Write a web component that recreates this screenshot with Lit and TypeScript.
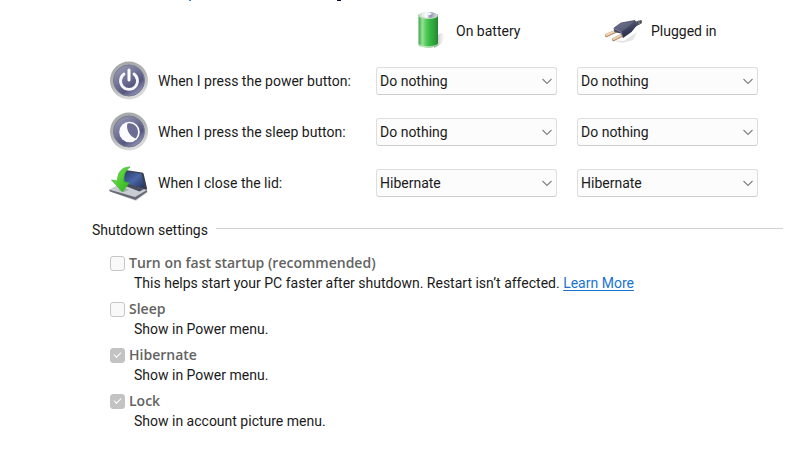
import { LitElement, html, css, svg } from "lit";
import { customElement } from "lit/decorators.js";

const batteryIcon = html`<svg class="icon" width="40" height="40" viewBox="0 0 40 40" aria-hidden="true">
  <defs>
    <linearGradient id="cell" x1="0" x2="1">
      <stop offset="0" stop-color="#3fa54a" /><stop offset=".2" stop-color="#93e292" />
      <stop offset=".38" stop-color="#58cc5e" /><stop offset=".6" stop-color="#35b442" />
      <stop offset=".82" stop-color="#2f9f3b" /><stop offset="1" stop-color="#23832f" />
    </linearGradient>
    <linearGradient id="cap" x1="0" x2="1">
      <stop offset="0" stop-color="#d9dde0" /><stop offset=".4" stop-color="#ffffff" />
      <stop offset=".6" stop-color="#8f90b4" /><stop offset="1" stop-color="#d5d8e2" />
    </linearGradient>
    <linearGradient id="cast" x1="0" x2="1">
      <stop offset="0" stop-color="#888" stop-opacity=".8" /><stop offset="1" stop-color="#ccc" stop-opacity="0" />
    </linearGradient>
  </defs>
  <path d="M28 26c4-5 9-5 9-1 0 4-4 9-11 12z" fill="url(#cast)" />
  <path d="M10.500 3.500v30c0 4 19.500 4 19.500 0v-30z" fill="url(#cell)" />
  <path d="M10.500 32v1.500c0 4 19.500 4 19.500 0V32c0 4-19.500 4-19.500 0z" fill="#cfe8cd" opacity=".7" />
  <ellipse cx="20.250" cy="4.500" rx="9.700" ry="3.600" fill="#c3dcc5" />
  <ellipse cx="20.500" cy="4" rx="8.300" ry="2.900" fill="url(#cap)" />
  <ellipse cx="20" cy="2.700" rx="3.500" ry="1.400" fill="#f4f5fa" />
</svg>`;

const plugIcon = html`<svg class="icon" width="40" height="40" viewBox="0 0 40 40" aria-hidden="true">
  <defs>
    <linearGradient id="body" x1="0" x2=".5" y1="0" y2="1">
      <stop offset="0" stop-color="#777b92" /><stop offset=".45" stop-color="#4c506c" />
      <stop offset="1" stop-color="#262840" />
    </linearGradient>
  </defs>
  <path d="M8 29l13 1 13-9-4 8-11 3z" fill="#bbb" opacity=".4" />
  <path d="M31 11l7.500-2 .5 3-7 4z" fill="#4b4b55" />
  <path d="M33 10l1 5M35.500 9.500l1 4" stroke="#8c8c95" stroke-width="1" />
  <path d="M3.500 24.500l11-5M10.500 28.500l10-5" stroke="#b08d68" stroke-width="3.200" stroke-linecap="round" />
  <path d="M3.500 24l11-5M10.500 28l10-5" stroke="#ecd2ae" stroke-width="2" stroke-linecap="round" />
  <path d="M10.500 17l7.500-5.500 14-2.500 2.500 4.500-6 7.500-8.500 6-2-4.500-6.500-1.500z" fill="url(#body)" />
  <path d="M12 17l6.500-4.500 12.500-2-7 6.500-6 4z" fill="#868ba3" opacity=".35" />
  <path d="M11 17.500l7 3.500 1.800 5.500" fill="none" stroke="#8589a0" stroke-width=".8" />
</svg>`;

const disc = (glyph: unknown) => html`<svg class="icon" width="40" height="40" viewBox="0 0 40 40" aria-hidden="true">
  <defs>
    <linearGradient id="rim" x1="0" y1="0" x2=".4" y2="1">
      <stop offset="0" stop-color="#a2a5a6" /><stop offset=".6" stop-color="#b2b4b6" />
      <stop offset="1" stop-color="#d8d9da" />
    </linearGradient>
    <linearGradient id="face" x1="0" y1="0" x2=".7" y2="1">
      <stop offset="0" stop-color="#a3a4bb" /><stop offset=".45" stop-color="#747599" />
      <stop offset=".75" stop-color="#565780" /><stop offset="1" stop-color="#9495b9" />
    </linearGradient>
  </defs>
  <circle cx="20" cy="19.500" r="19" fill="url(#rim)" />
  <circle cx="20" cy="19.500" r="15.500" fill="url(#face)" stroke="#77798c" stroke-width="1" />
  ${glyph}
</svg>`;

const powerIcon = disc(svg`
  <path d="M15 13a8.500 8.500 0 1 0 10 0" fill="none" stroke="#f7f7fb" stroke-width="2.800" stroke-linecap="round" />
  <path d="M20 9v10" stroke="#fff" stroke-width="3" stroke-linecap="round" />`);

const sleepIcon = disc(svg`
  <circle cx="20.500" cy="20" r="10.300" fill="#fcfcff" />
  <path d="M18.500 11.500c5-1.500 10.500 2.500 10.500 8.500 0 3-1 5-2.500 6.500C21 24.500 16.500 17.500 18.500 11.500z" fill="#6c6d92" />`);

const lidIcon = html`<svg class="icon" width="40" height="40" viewBox="0 0 40 40" aria-hidden="true">
  <defs>
    <linearGradient id="screen" x1="0" y1="0" x2="1" y2="1">
      <stop offset="0" stop-color="#2b3868" /><stop offset=".5" stop-color="#4a68a8" />
      <stop offset="1" stop-color="#22305f" />
    </linearGradient>
    <linearGradient id="arrow" x1="0" y1="0" x2="1" y2="1">
      <stop offset="0" stop-color="#7fe850" /><stop offset="1" stop-color="#27b01a" />
    </linearGradient>
  </defs>
  <path d="M2 29l25 9 12-9-3-4z" fill="#aaa" opacity=".45" />
  <path d="M13 6.500l20 3c1 .2 1.500.6 1.700 1.500l3.500 15-2.500 2L14 22z" fill="#3b3f4c" />
  <path d="M15 8l17.500 2.700 3 14.300L15 20.500z" fill="url(#screen)" />
  <path d="M0 26.500l13-6.500 25 7-12 8z" fill="#c9ccd3" />
  <path d="M0 26.500L26 34l12-7v2L26.500 37 1 28.500z" fill="#666a74" />
  <path d="M14 22l3-1.500 18 5.500-4.500 2.500z" fill="#474c5c" />
  <path d="M9 27l5-2 6 1.700-5 2.200z" fill="#a4a8b2" />
  <path d="M21 4c-8 0-12.500 5-12.500 14L2.500 17l11 12L20 20l-5-1.200C14.500 12 16 8 21 4z" fill="url(#arrow)" stroke="#3abb2c" stroke-width=".7" />
</svg>`;

const actions = ["Do nothing", "Sleep", "Hibernate", "Shut down"];

const rows = [
  { id: "power", icon: powerIcon, label: "When I press the power button:", value: "Do nothing" },
  { id: "sleep", icon: sleepIcon, label: "When I press the sleep button:", value: "Do nothing" },
  { id: "lid", icon: lidIcon, label: "When I close the lid:", value: "Hibernate" },
];

const options = [
  {
    id: "fast",
    title: "Turn on fast startup (recommended)",
    note: "This helps start your PC faster after shutdown. Restart isn’t affected.",
    link: "Learn More",
    checked: false,
  },
  { id: "opt-sleep", title: "Sleep", note: "Show in Power menu.", checked: false },
  { id: "opt-hibernate", title: "Hibernate", note: "Show in Power menu.", checked: true },
  { id: "opt-lock", title: "Lock", note: "Show in account picture menu.", checked: true },
];

@customElement("app-root")
export class AppRoot extends LitElement {
  static styles = css`
    :host {
      display: block;
      box-sizing: border-box;
      min-height: 100vh;
      padding: 6px 17px 24px 92px;
      background:
        linear-gradient(#3c86c8, #3c86c8) 189px 0 / 2px 1px no-repeat,
        linear-gradient(#10102a, #10102a) 337px 0 / 4px 1px no-repeat,
        #fff;
      color: #1a1a1a;
      font: 14px/21px "Segoe UI", Roboto, "Open Sans", sans-serif;
    }
    .grid {
      display: grid;
      grid-template-columns: 284px 1fr 1fr;
      grid-template-rows: 49px;
      grid-auto-rows: 51px;
      align-items: center;
      margin-right: 25px;
    }
    .grid > :nth-child(3n) {
      margin-left: 10px;
    }
    .grid > :nth-child(3n + 2) {
      margin-right: 10px;
    }
    .head {
      display: flex;
      align-items: center;
      gap: 8px;
      padding-left: 32px;
      white-space: nowrap;
    }
    .head.plugged {
      padding-left: 26px;
    }
    .name {
      display: flex;
      align-items: center;
      gap: 9px;
      padding-left: 17px;
      white-space: nowrap;
    }
    .head span,
    .name span {
      padding-top: 2px;
    }
    .icon {
      display: block;
      flex: none;
    }
    .pick {
      position: relative;
    }
    select {
      display: block;
      box-sizing: border-box;
      width: 100%;
      height: 28px;
      margin: 0;
      padding: 2px 28px 0 3px;
      appearance: none;
      border: 1px solid #dedede;
      border-bottom-color: #cdcdcd;
      border-radius: 3px;
      background: #fcfcfc;
      color: inherit;
      font: inherit;
    }
    .chevron {
      position: absolute;
      right: 5px;
      top: 9px;
      pointer-events: none;
    }
    fieldset {
      margin: 12px 0 0;
      padding: 0;
      border: 0;
      min-width: 0;
    }
    legend {
      display: flex;
      align-items: center;
      gap: 8px;
      box-sizing: border-box;
      width: 100%;
      padding: 0;
    }
    legend::after {
      content: "";
      flex: 1;
      height: 1px;
      margin-bottom: 4px;
      background: #d2d2d2;
    }
    .list {
      display: grid;
      gap: 3px;
      padding: 10px 0 0 18px;
    }
    .title {
      display: flex;
      align-items: center;
      gap: 4px;
      height: 22px;
      color: #636363;
      font-family: "Segoe UI", "Open Sans", sans-serif;
      font-weight: 600;
    }
    .note {
      padding-left: 24px;
    }
    input {
      position: relative;
      flex: none;
      box-sizing: border-box;
      width: 15px;
      height: 15px;
      margin: 2px 0 0;
      appearance: none;
      border: 1px solid #c6c6c6;
      border-radius: 3px;
      background: #f9f9f9;
    }
    input:checked {
      border-color: #c3c3c3;
      background: #c3c3c3;
    }
    input:checked::before {
      content: "";
      position: absolute;
      left: 3px;
      top: 3px;
      width: 6px;
      height: 3px;
      border: solid #fff;
      border-width: 0 0 1px 1px;
      transform: rotate(-45deg);
    }
    a {
      color: #1a73d1;
      text-underline-offset: 2px;
    }
  `;

  private picker(id: string, label: string, value: string) {
    return html`<div class="pick">
      <select id=${id} aria-label=${label}>
        ${actions.map((a) => html`<option ?selected=${a === value}>${a}</option>`)}
      </select>
      <svg class="chevron" width="10" height="10" viewBox="0 0 10 10" aria-hidden="true">
        <path d="M.5 3l4.500 4.500L9.500 3" fill="none" stroke="#808080" stroke-width="1.100" />
      </svg>
    </div>`;
  }

  render() {
    return html`
      <div class="grid">
        <span></span>
        <div class="head">${batteryIcon}<span>On battery</span></div>
        <div class="head plugged">${plugIcon}<span>Plugged in</span></div>
        ${rows.map(
          (r) => html`
            <label class="name" for="${r.id}-battery">${r.icon}<span>${r.label}</span></label>
            ${this.picker(`${r.id}-battery`, `${r.label} On battery`, r.value)}
            ${this.picker(`${r.id}-plugged`, `${r.label} Plugged in`, r.value)}
          `,
        )}
      </div>
      <fieldset>
        <legend>Shutdown settings</legend>
        <div class="list">
          ${options.map(
            (o) => html`<div>
              <div class="title">
                <input type="checkbox" id=${o.id} ?checked=${o.checked} disabled />
                <label for=${o.id}>${o.title}</label>
              </div>
              <div class="note">${o.note} ${o.link ? html`<a href="#">${o.link}</a>` : ""}</div>
            </div>`,
          )}
        </div>
      </fieldset>
    `;
  }
}
